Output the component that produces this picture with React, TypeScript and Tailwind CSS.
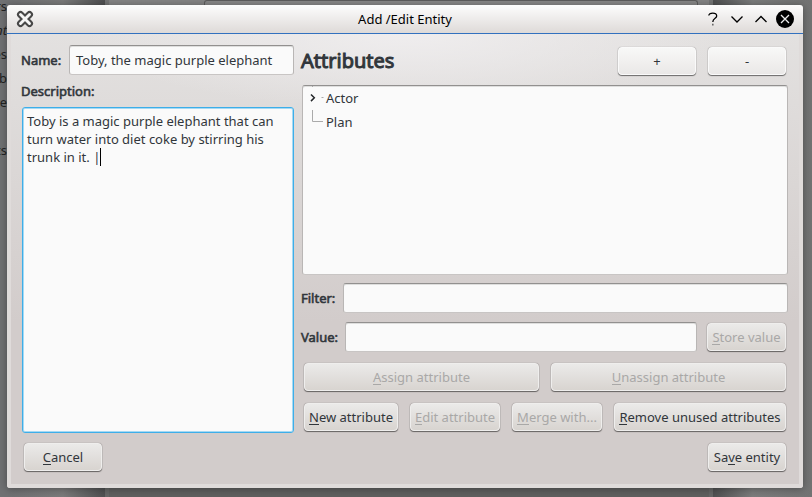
import type { ReactNode } from "react";

const labelClass =
  "whitespace-pre font-normal text-[#31363b] [-webkit-text-stroke:0.6px_#31363b]";
const fieldClass =
  "rounded-[3px] border border-[#b9b6b5] border-t-[#92908f] border-b-[#c8c5c4] bg-[#fafafa] shadow-[inset_0_1px_0_#dededd]";

type ButtonProps = {
  children: ReactNode;
  className: string;
  disabled?: boolean;
  light?: boolean;
};

function Button({ children, className, disabled, light }: ButtonProps) {
  return (
    <button
      className={`flex h-[28px] shrink-0 items-center justify-center whitespace-pre rounded-[4px] border shadow-[0_1px_1px_rgba(0,0,0,0.5),0_0_1px_rgba(0,0,0,0.45)] ${
        light
          ? "border-[#fafafa] bg-linear-to-b from-[#f8f8f7] to-[#eae8e7]"
          : "border-[#efeeed] bg-linear-to-b from-[#ebeae9] to-[#d8d4d0]"
      } ${disabled ? "text-[#a9a8a7]" : "text-[#31363b]"} ${className}`}
    >
      {children}
    </button>
  );
}

function Key({ children }: { children: string }) {
  return <span className="inline-block h-[16px] self-center -mt-[2px] leading-[18px] shadow-[0_1px_0_currentColor]">{children}</span>;
}

function Backdrop() {
  return (
    <div className="flex h-full">
      <div className="w-[105px] overflow-hidden bg-linear-to-r from-[#707173] from-10% via-[#7b7b7b] via-60% to-[#4f5051] text-[#222]">
        <div className="flex w-[7px] flex-col items-end leading-6 whitespace-pre">
          <span className="-mt-[6px]">rs</span>
          <span className="italic">nt</span>
          <span>es</span>
          <span>b</span>
          <span>e</span>
          <span className="mt-6">ts</span>
        </div>
      </div>
      <div className="flex-1 border-x-4 border-[#6b6c6c]/60 bg-linear-to-b from-[#858585] to-[#5f605f]">
        <div className="ml-[95px] h-[6px] w-[494px] rounded-t-[3px] border border-b-0 border-[#5d5d5d] bg-[#888]" />
      </div>
      <div className="w-[99px] bg-linear-to-r from-[#4f5051] via-[#7c7d7d] via-40% to-[#727373]" />
    </div>
  );
}

function TitleBar() {
  return (
    <header className="flex h-[29px] shrink-0 items-center border-b border-[#3271bf] bg-linear-to-b from-[#fdfdfd] to-[#dedad8] text-black">
      <svg width="18" height="18" viewBox="0 0 18 18" className="ml-[9px]" fill="none" strokeLinecap="round">
        <path d="M4.5 4.5 13.5 13.5M13.5 4.5 4.5 13.5" stroke="#484848" strokeWidth="7" />
        <path d="M4.5 4.5 13.5 13.5M13.5 4.5 4.5 13.5" stroke="#f5f5f5" strokeWidth="2.9" />
      </svg>
      <h1 className="flex-1 pl-[72px] text-center font-normal">Add /Edit Entity</h1>
      <svg width="90" height="18" viewBox="0 0 90 18" className="mr-[9px]" fill="none" stroke="#000" strokeWidth="1.3">
        <path d="M4.8 5.5C5 3.8 6.5 3.1 8.8 3.1C11.3 3.1 12.7 4.2 12.7 6C12.7 8.5 8.8 8 8.8 12" />
        <path d="M8.8 13.8V15.5" strokeWidth="1.6" stroke="#666" />
        <path d="M27.5 6.5 33 12 38.5 6.5M51.5 12 57 6.5 62.5 12" />
        <circle cx="81" cy="9" r="9" fill="#000" stroke="none" />
        <path d="M77 5 85 13M85 5 77 13" stroke="#eee" />
      </svg>
    </header>
  );
}

function AttributeTree() {
  return (
    <ul className={`mt-[10px] h-[190px] ${fieldClass}`}>
      <li className="flex h-6 items-center">
        <svg width="23" height="24" viewBox="0 0 23 24" fill="none">
          <path d="M9.5 0V1M18.5 11.5H20.5" stroke="#aaa" />
          <path d="M8 8.5 11.3 11.8 8 15.1" stroke="#232629" strokeWidth="1.5" />
        </svg>
        Actor
      </li>
      <li className="flex h-6 items-center">
        <svg width="23" height="24" viewBox="0 0 23 24" fill="none">
          <path d="M9.5-2V11.5H20" stroke="#aaa" />
        </svg>
        Plan
      </li>
    </ul>
  );
}

export default function App() {
  return (
    <main className="relative h-[497px] w-[812px] overflow-hidden bg-[#6c6d6e] font-['Noto_Sans',sans-serif] text-[13px] leading-[18px] text-[#31363b]">
      <Backdrop />
      <section className="absolute top-[5px] left-[7px] flex h-[483px] w-[796px] flex-col overflow-hidden rounded-[3px] shadow-[0_1px_8px_rgba(0,0,0,0.35)]">
        <TitleBar />
        <div className="flex flex-1 flex-col border-4 border-t-0 border-[#dfdbda] bg-[radial-gradient(ellipse_320px_75px_at_50%_0%,#efedee,transparent),linear-gradient(to_bottom,#e3e1e0_0%,#d2cccb_64%,#d2cccb_100%)] px-[11px]">
          <div className="flex gap-[8px]">
            <div className="flex h-[399px] w-[272px] flex-col">
              <div className="mt-[11px] flex h-[30px] items-center">
                <span className={`${labelClass} -ml-px w-[48px]`}>Name:</span>
                <div className={`flex h-[30px] flex-1 items-center pl-[6px] ${fieldClass}`}>Toby, the magic purple elephant</div>
              </div>
              <span className={`${labelClass} mt-[7px] mb-[7px] -ml-px`}>Description:</span>
              <div className="flex-1 whitespace-pre rounded-[3px] border border-[#3daee9] bg-[#fafafa] px-[4px] pt-[4px] shadow-[inset_0_0_0_1px_#a5d9f3]">
                <div>Toby is a magic purple elephant that can</div>
                <div>turn water into diet coke by stirring his</div>
                <div className="flex">
                  trunk in it. |<span className="h-[18px] w-px bg-black" />
                </div>
              </div>
            </div>
            <div className="w-[486px]">
              <div className="flex h-[41px] items-end gap-[12px] pr-[2px]">
                <h2 className="-ml-px flex-1 pb-px text-[20px] leading-[26px] font-normal text-[#31363b] [-webkit-text-stroke:1px_#31363b]">Attributes</h2>
                <Button light className="w-[78px]">+</Button>
                <Button light className="w-[78px]">-</Button>
              </div>
              <AttributeTree />
              <div className="mt-[8px] flex h-[30px] items-center">
                <span className={`${labelClass} -ml-px w-[42px]`}>Filter:</span>
                <div className={`h-[30px] flex-1 ${fieldClass}`} />
              </div>
              <div className="mt-[9px] flex h-[30px] items-center pr-[2px]">
                <span className={`${labelClass} -ml-px w-[44px]`}>Value:</span>
                <div className={`mr-[10px] h-[30px] flex-1 ${fieldClass}`} />
                <Button disabled className="w-[79px]"><Key>S</Key>tore value</Button>
              </div>
              <div className="mt-[11px] flex justify-between px-[2px]">
                <Button disabled className="w-[235px]"><Key>A</Key>ssign attribute</Button>
                <Button disabled className="w-[235px]"><Key>U</Key>nassign attribute</Button>
              </div>
              <div className="mt-[12px] flex justify-between px-[2px]">
                <Button className="w-[94px]"><Key>N</Key>ew attribute</Button>
                <Button disabled className="w-[90px]"><Key>E</Key>dit attribute</Button>
                <Button disabled className="w-[90px]"><Key>M</Key>erge with...</Button>
                <Button className="w-[172px]"><Key>R</Key>emove unused attributes</Button>
              </div>
            </div>
          </div>
          <footer className="mt-[10px] flex justify-between pr-[2px] pl-[2px]">
            <Button className="w-[78px]"><Key>C</Key>ancel</Button>
            <Button className="w-[78px]">Sa<Key>v</Key>e entity</Button>
          </footer>
        </div>
      </section>
    </main>
  );
}
